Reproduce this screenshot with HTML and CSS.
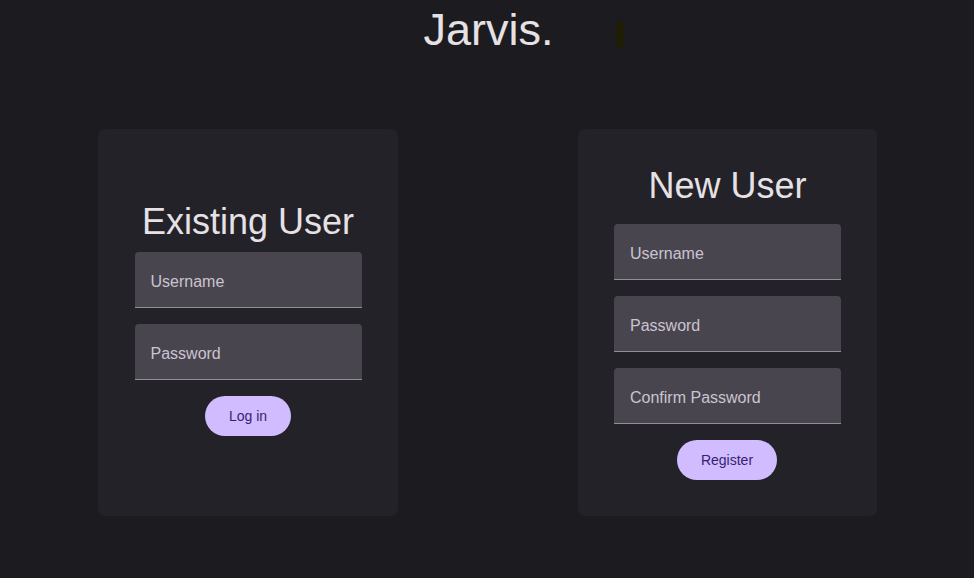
FILE: index.html
```html
<!DOCTYPE html>
<html>
<head>
<meta charset="utf-8">
<link rel="stylesheet" href="styles.css">
</head>
<body>
<header class="top">
  <h1 class="brand">Jarvis.</h1>
  <span class="blip"></span>
</header>
<main class="cards">
  <section class="card card-login">
    <h2 class="card-title title-login">Existing User</h2>
    <div class="field"><span class="label">Username</span></div>
    <div class="field"><span class="label">Password</span></div>
    <button class="btn btn-login">Log in</button>
  </section>
  <section class="card card-register">
    <h2 class="card-title title-register">New User</h2>
    <div class="field"><span class="label">Username</span></div>
    <div class="field"><span class="label">Password</span></div>
    <div class="field"><span class="label">Confirm Password</span></div>
    <button class="btn btn-register">Register</button>
  </section>
</main>
</body>
</html>
```

FILE: styles.css
```css
* { box-sizing: border-box; }
html, body {
  margin: 0;
  padding: 0;
  background: #1c1b1f;
  font-family: "Liberation Sans", Arial, sans-serif;
  color: #e6e1e5;
  height: 100%;
}
.top {
  position: relative;
  display: flex;
  justify-content: center;
  height: 129px;
}
.brand {
  margin: 0;
  padding-top: 4px;
  padding-left: 3px;
  font-size: 45px;
  font-weight: 400;
  line-height: 52px;
  color: #e6e1e5;
  height: 56px;
}
.blip {
  position: absolute;
  left: 616px;
  top: 22px;
  width: 8px;
  height: 25px;
  background: #1f1d05;
}
.cards {
  display: flex;
  justify-content: center;
  gap: 180px;
  padding-left: 1px;
}
.card {
  width: 300px;
  height: 387px;
  background: #232228;
  border-radius: 7px;
  display: flex;
  flex-direction: column;
  align-items: center;
}
.card-register { width: 299px; }
.card-login { padding-top: 72px; }
.card-register { padding-top: 36px; }
.card-title {
  margin: 0;
  font-size: 36px;
  font-weight: 400;
  line-height: 41px;
  color: #e6e1e5;
}
.title-login { margin-bottom: 10px; }
.title-register { margin-bottom: 18px; }
.field {
  width: 227px;
  height: 56px;
  background: #49454f;
  border-radius: 4px 4px 0 0;
  border-bottom: 1px solid #938f99;
  display: flex;
  align-items: center;
  padding-left: 16px;
  margin-bottom: 16px;
}
.label {
  font-size: 16px;
  color: #cac4d0;
  margin-top: 4px;
}
.btn {
  height: 40px;
  border: none;
  border-radius: 20px;
  background: #d0bcff;
  color: #381e72;
  font-family: "Liberation Sans", Arial, sans-serif;
  font-size: 14px;
  padding: 0;
}
.btn-login { width: 86px; }
.btn-register { width: 100px; margin-right: 1px; }
```
